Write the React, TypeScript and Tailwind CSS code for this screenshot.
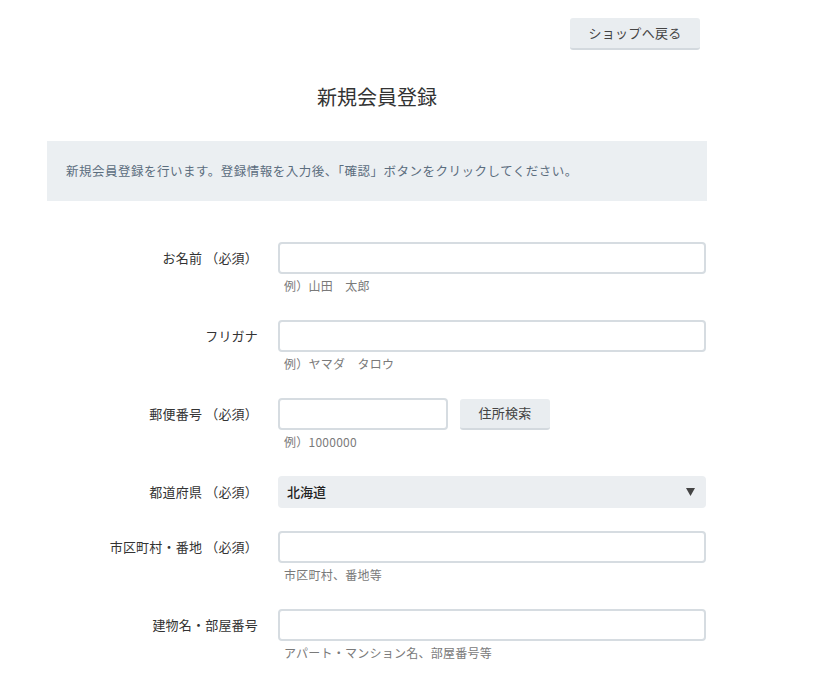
const font = { fontFamily: "'Noto Sans CJK JP', 'Noto Sans', sans-serif" };

type Row = {
    label: string;
    hint?: string;
    kind?: "text" | "zip" | "select";
};

const rows: Row[] = [
    { label: "お名前 （必須）", hint: "例）山田　太郎" },
    { label: "フリガナ", hint: "例）ヤマダ　タロウ" },
    { label: "郵便番号 （必須）", hint: "例）1000000", kind: "zip" },
    { label: "都道府県 （必須）", kind: "select" },
    { label: "市区町村・番地 （必須）", hint: "市区町村、番地等" },
    { label: "建物名・部屋番号", hint: "アパート・マンション名、部屋番号等" },
];

const inputCls =
    "h-[32px] rounded-[4px] border-2 border-[#d6dce1] bg-white outline-none px-2 text-[13px]";

const App = () => {
    return (
        <div className="w-[826px] min-h-[689px] bg-white text-[#333]" style={font}>
            <div className="w-[660px] ml-[47px]">
                <div className="flex justify-end pt-[18px] pr-[7px]">
                    <button className="h-[32px] w-[130px] rounded-[3px] bg-[#e9edf0] border-b-2 border-[#d3d9de] text-[13px] text-[#444] tracking-[0.3px]">
                        ショップへ戻る
                    </button>
                </div>

                <h1 className="text-center text-[20px] leading-none mt-[37px]">新規会員登録</h1>

                <div className="mt-[34px] h-[60px] bg-[#ebeff2] flex items-center px-[19px] text-[12.5px] tracking-[0.5px] text-[#5b6d7e]">
                    新規会員登録を行います。登録情報を入力後、「確認」ボタンをクリックしてください。
                </div>

                <div className="mt-[41px] flex flex-col">
                    {rows.map((r) => (
                        <div
                            key={r.label}
                            className={`grid grid-cols-[211px_428px] gap-x-[20px] ${r.hint ? "mb-[24px]" : "mb-[23px]"}`}
                        >
                            <div className="h-[32px] flex items-center justify-end text-[13px] tracking-[0.2px] text-[#333]">
                                {r.label}
                            </div>
                            <div>
                                {r.kind === "select" ? (
                                    <div className="h-[32px] rounded-[4px] bg-[#ebeef1] flex items-center justify-between pl-[9px] pr-[11px]">
                                        <span className="text-[13px] font-medium text-[#222]">北海道</span>
                                        <svg width="9" height="8" viewBox="0 0 9 8">
                                            <path d="M0 0h9L4.5 8z" fill="#444" />
                                        </svg>
                                    </div>
                                ) : r.kind === "zip" ? (
                                    <div className="flex items-center gap-[12px]">
                                        <input className={`${inputCls} w-[170px]`} />
                                        <button className="h-[31px] w-[90px] rounded-[3px] bg-[#e9edf0] border-b-2 border-[#d3d9de] text-[13px] text-[#444] tracking-[0.3px]">
                                            住所検索
                                        </button>
                                    </div>
                                ) : (
                                    <input className={`${inputCls} w-full`} />
                                )}
                                {r.hint && (
                                    <div className="mt-[4px] mb-[2px] pl-[6px] text-[12px] leading-[16px] tracking-[0.25px] text-[#7a7a7a]">
                                        {r.hint}
                                    </div>
                                )}
                            </div>
                        </div>
                    ))}
                </div>
            </div>
        </div>
    );
};

export default App;
